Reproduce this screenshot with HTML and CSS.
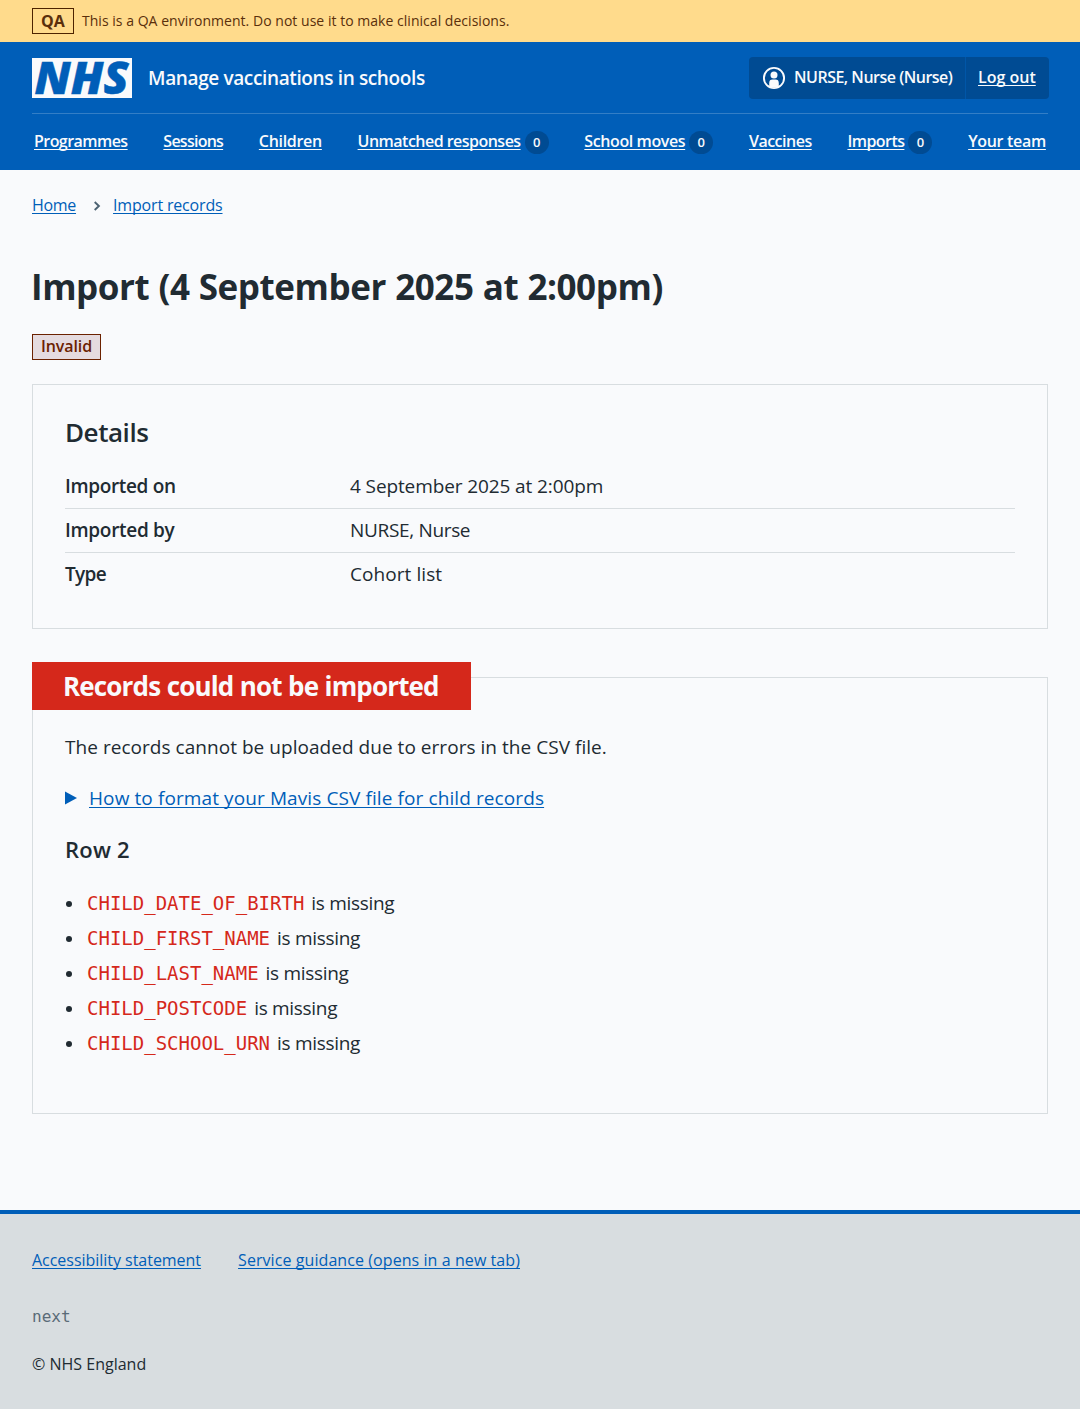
FILE: index.html
```
<!DOCTYPE html>
<html lang="en">
<head>
<meta charset="utf-8">
<title>Import – Manage vaccinations in schools</title>
<link rel="stylesheet" href="styles.css">
</head>
<body>
<div class="environment">
  <strong class="environment-tag">QA</strong>
  <span class="environment-text">This is a QA environment. Do not use it to make clinical decisions.</span>
</div>
<header class="header">
  <div class="header-top">
    <svg class="logo" viewBox="0 0 100 40" width="100" height="40" role="img" aria-label="NHS">
      <rect width="100" height="40" fill="#f9fafc"/>
      <text class="logo-text" x="2.5" y="36.2" textLength="94" lengthAdjust="spacingAndGlyphs">NHS</text>
    </svg>
    <span class="service">Manage vaccinations in schools</span>
    <div class="account">
      <span class="account-user">
        <svg class="account-icon" viewBox="0 0 24 24" width="24" height="24" aria-hidden="true">
          <circle cx="12" cy="12" r="10.1" fill="none" stroke="#f9fafc" stroke-width="1.9"/>
          <circle cx="12" cy="9" r="3.5" fill="#f9fafc"/>
          <path d="M7.2 20.5V17a3.4 3.4 0 0 1 3.4-3.4h2.8a3.4 3.4 0 0 1 3.4 3.4v3.5a10 10 0 0 1-9.6 0Z" fill="#f9fafc"/>
        </svg>
        <span class="account-name">NURSE, Nurse (Nurse)</span>
      </span>
      <a class="account-logout" href="#">Log out</a>
    </div>
  </div>
  <nav class="nav">
    <a class="programmes" href="#">Programmes</a>
    <a class="sessions" href="#">Sessions</a>
    <a class="children" href="#">Children</a>
    <span class="nav-item"><a class="unmatched" href="#">Unmatched responses</a><span class="count">0</span></span>
    <span class="nav-item"><a class="moves" href="#">School moves</a><span class="count">0</span></span>
    <a class="vaccines" href="#">Vaccines</a>
    <span class="nav-item"><a class="imports" href="#">Imports</a><span class="count">0</span></span>
    <a class="team" href="#">Your team</a>
  </nav>
</header>
<main class="main">
  <nav class="breadcrumb">
    <a class="crumb-home" href="#">Home</a>
    <svg class="chevron" viewBox="0 0 8 10" width="8" height="10" aria-hidden="true"><path d="M1.7 1 5.9 5 1.7 9" fill="none" stroke="#4c6272" stroke-width="1.9"/></svg>
    <a class="crumb-import" href="#">Import records</a>
  </nav>
  <h1 class="title">Import (4 September 2025 at 2:00pm)</h1>
  <strong class="status">Invalid</strong>
  <section class="card">
    <h2 class="card-heading">Details</h2>
    <dl class="summary">
      <div class="summary-row"><dt class="on">Imported on</dt><dd class="date">4 September 2025 at 2:00pm</dd></div>
      <div class="summary-row"><dt class="by">Imported by</dt><dd class="nurse">NURSE, Nurse</dd></div>
      <div class="summary-row"><dt class="type">Type</dt><dd class="cohort">Cohort list</dd></div>
    </dl>
  </section>
  <section class="card card-error">
    <h2 class="error-heading">Records could not be imported</h2>
    <p class="message">The records cannot be uploaded due to errors in the CSV file.</p>
    <div class="details">
      <svg class="arrow" viewBox="0 0 12 14" width="12" height="14" aria-hidden="true"><path d="M0 0.5 12 7 0 13.5Z" fill="#005eb8"/></svg>
      <a class="details-link" href="#">How to format your Mavis CSV file for child records</a>
    </div>
    <h3 class="row-heading">Row 2</h3>
    <ul class="errors">
      <li><code>CHILD_DATE_OF_BIRTH</code><span>is missing</span></li>
      <li><code>CHILD_FIRST_NAME</code><span>is missing</span></li>
      <li><code>CHILD_LAST_NAME</code><span>is missing</span></li>
      <li><code>CHILD_POSTCODE</code><span>is missing</span></li>
      <li><code>CHILD_SCHOOL_URN</code><span>is missing</span></li>
    </ul>
  </section>
</main>
<footer class="footer">
  <div class="footer-links">
    <a class="accessibility" href="#">Accessibility statement</a>
    <a class="guidance" href="#">Service guidance (opens in a new tab)</a>
  </div>
  <code class="version">next</code>
  <p class="copyright">© NHS England</p>
</footer>
</body>
</html>
```
FILE: styles.css
```
* { box-sizing: border-box; }
body { margin: 0; background: #f9fafc; color: #212b32; font: 400 19px/28px "Open Sans", "Liberation Sans", sans-serif; }
h1, h2, h3, p, dl, dd, ul { margin: 0; padding: 0; }
a { color: #005eb8; text-decoration-thickness: 1px; text-underline-offset: 2px; text-decoration-skip-ink: none; white-space: nowrap; }

.environment { display: flex; align-items: center; gap: 8px; height: 42px; padding: 0 32px; background: #ffdb8c; color: #5a2f0b; }
.environment-tag { width: 42px; height: 26px; border: 1px solid #4d2300; font-size: 16px; font-weight: 700; line-height: 24px; text-align: center; }
.environment-text { font-size: 14px; letter-spacing: .03px; }

.header { height: 128px; padding: 0 32px; background: #005eb8; color: #f9fafc; }
.header a { color: #f9fafc; }
.header-top { display: flex; align-items: center; height: 72px; border-bottom: 1px solid #337ec6; }
.logo { overflow: visible; }
.logo-text { font: italic 800 45px "Open Sans", sans-serif; fill: #005eb8; stroke: #005eb8; stroke-width: .5; }
.service { margin-left: 16px; font-weight: 600; letter-spacing: -.37px; }
.account { display: flex; margin: 0 -1px 0 auto; width: 300px; height: 42px; border-radius: 4px; background: #004b93; font-size: 16px; font-weight: 600; line-height: 41px; overflow: hidden; }
.account-user { display: flex; align-items: center; width: 217px; padding-left: 13px; border-right: 1px solid #0056a8; }
.account-name { margin-left: 8px; letter-spacing: -.5px; white-space: nowrap; }
.account-logout { padding-left: 12px; }
.nav { display: flex; justify-content: space-between; align-items: center; height: 56px; padding: 0 2px; font-size: 16px; font-weight: 600; line-height: 26px; }
.nav a { padding-bottom: 2px; }
.nav-item { display: flex; align-items: center; gap: 4px; }
.count { width: 24px; height: 23px; margin-top: 1px; border-radius: 12px; background: #004b93; font-size: 13px; line-height: 23px; text-align: center; }
.programmes { letter-spacing: -.55px; }
.sessions { letter-spacing: -.75px; }
.children { letter-spacing: -.31px; }
.unmatched { letter-spacing: -.525px; }
.moves { letter-spacing: -.4px; }
.vaccines { letter-spacing: -.5px; }
.imports { letter-spacing: -.56px; }
.team { letter-spacing: -.31px; }

.main { height: 1040px; padding: 23px 32px 0; }
.breadcrumb { display: flex; align-items: center; height: 24px; font-size: 16px; line-height: 24px; }
.crumb-home { letter-spacing: -.3px; }
.crumb-import { letter-spacing: -.17px; }
.chevron { margin: 1px 12px 0 17px; }
.title { margin: 47px 0 0 -1px; font-size: 35px; font-weight: 700; line-height: 46px; letter-spacing: -.42px; word-spacing: .5px; white-space: nowrap; }
.status { display: block; width: 69px; height: 26px; margin-top: 24px; border: 1px solid #6b2100; background: #e5dbdf; color: #6b2100; font-size: 16px; font-weight: 600; line-height: 23px; text-align: center; letter-spacing: -.11px; }
.card { height: 245px; margin-top: 24px; padding: 31px 32px; border: 1px solid #d8dde0; }
.card-heading { font-size: 26px; font-weight: 600; line-height: 32px; letter-spacing: -.45px; }
.summary { margin-top: 17px; }
.summary-row { display: grid; grid-template-columns: 285px 1fr; height: 44px; padding-top: 7px; border-bottom: 1px solid #d8dde0; }
.summary-row:last-child { border: 0; }
dt { font-weight: 600; }
.on { letter-spacing: -.35px; }
.by { letter-spacing: -.3px; }
.type { letter-spacing: -.67px; }
.date { letter-spacing: -.11px; }
.nurse { letter-spacing: -.33px; }
.cohort { letter-spacing: .07px; }

.card-error { height: 437px; margin-top: 48px; padding-top: 0; }
.error-heading { width: 439px; height: 48px; margin: -16px 0 0 -33px; padding-left: 31px; background: #d5281b; color: #f9fafc; font-size: 26px; font-weight: 700; line-height: 48px; letter-spacing: -.85px; word-spacing: .5px; white-space: nowrap; }
.message { margin-top: 23px; letter-spacing: .04px; }
.details { display: flex; align-items: center; gap: 12px; margin-top: 23px; }
.details-link { letter-spacing: .1px; }
.row-heading { margin-top: 23px; font-size: 22px; font-weight: 600; letter-spacing: .2px; }
.errors { margin-top: 22px; list-style: none; }
.errors li { display: flex; align-items: center; height: 35px; }
.errors li::before { content: ""; width: 6px; height: 6px; margin: 2px 15px 0 1px; border-radius: 50%; background: #212b32; }
.errors code { color: #d5281b; }
.errors span { margin-left: 7px; letter-spacing: -.3px; }
code { font-family: "DejaVu Sans Mono", monospace; }

.footer { height: 199px; padding: 34px 32px 0; border-top: 4px solid #005eb8; background: #d8dde0; font-size: 16px; line-height: 24px; }
.footer-links { display: flex; gap: 37px; }
.accessibility { letter-spacing: -.03px; }
.guidance { letter-spacing: .075px; }
.version { display: block; margin-top: 33px; color: #5a6b78; }
.copyright { margin-top: 23px; }
```
